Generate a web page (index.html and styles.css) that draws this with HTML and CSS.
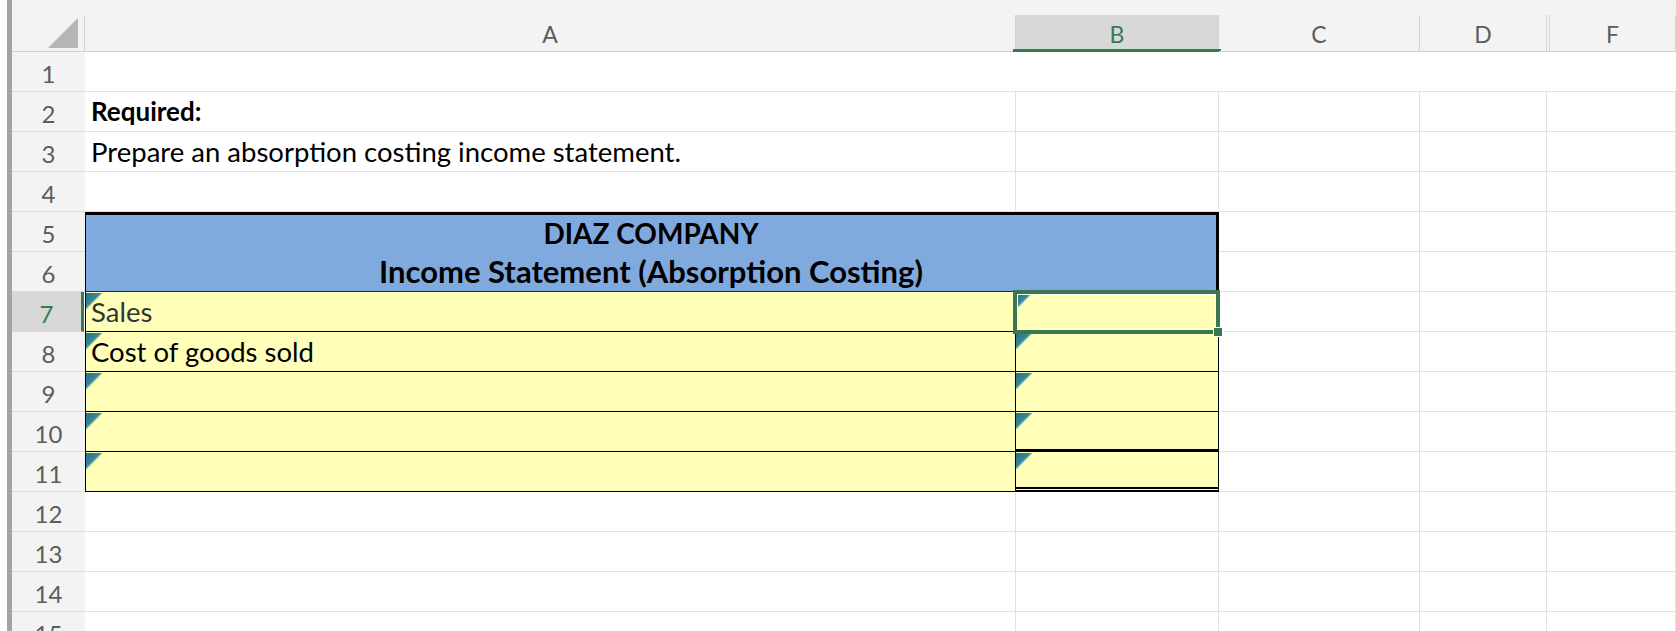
FILE: index.html
```html
<!DOCTYPE html>
<html lang="en">
<head>
    <meta charset="UTF-8">
    <title>Absorption costing</title>
    <link rel="stylesheet" href="styles.css">
</head>
<body>
    <div class="window">
        <div class="sheet">
            <div class="top-strip"></div>

            <div class="row head">
                <div class="hc corner">
                    <svg width="30" height="30" viewBox="0 0 30 30"><polygon points="0,30 30,30 30,0" fill="#b5b5b5"/></svg>
                </div>
                <div class="hc">A</div>
                <div class="hc sel">B</div>
                <div class="hc">C</div>
                <div class="hc">D</div>
                <div class="hc"></div>
                <div class="hc">F</div>
            </div>

            <div class="row first">
                <div class="rh">1</div>
                <div class="c"></div><div class="c"></div><div class="c"></div><div class="c"></div><div class="c e"></div><div class="c"></div>
            </div>
            <div class="row">
                <div class="rh">2</div>
                <div class="c bold">Required:</div><div class="c"></div><div class="c"></div><div class="c"></div><div class="c e"></div><div class="c"></div>
            </div>
            <div class="row">
                <div class="rh">3</div>
                <div class="c">Prepare an absorption costing income statement.</div><div class="c"></div><div class="c"></div><div class="c"></div><div class="c e"></div><div class="c"></div>
            </div>
            <div class="row">
                <div class="rh">4</div>
                <div class="c"></div><div class="c"></div><div class="c"></div><div class="c"></div><div class="c e"></div><div class="c"></div>
            </div>
            <div class="row">
                <div class="rh">5</div>
                <div class="c title top">DIAZ COMPANY</div><div class="c"></div><div class="c"></div><div class="c e"></div><div class="c"></div>
            </div>
            <div class="row">
                <div class="rh">6</div>
                <div class="c title bottom">Income Statement (Absorption Costing)</div><div class="c"></div><div class="c"></div><div class="c e"></div><div class="c"></div>
            </div>
            <div class="row">
                <div class="rh active">7</div>
                <div class="c in a tri grey">Sales</div>
                <div class="c in b tri">
                    <div class="selection"><span class="handle"></span></div>
                </div>
                <div class="c"></div><div class="c"></div><div class="c e"></div><div class="c"></div>
            </div>
            <div class="row">
                <div class="rh">8</div>
                <div class="c in a tri">Cost of goods sold</div><div class="c in b tri"></div><div class="c"></div><div class="c"></div><div class="c e"></div><div class="c"></div>
            </div>
            <div class="row">
                <div class="rh">9</div>
                <div class="c in a tri"></div><div class="c in b tri"></div><div class="c"></div><div class="c"></div><div class="c e"></div><div class="c"></div>
            </div>
            <div class="row">
                <div class="rh">10</div>
                <div class="c in a tri"></div><div class="c in b tri thick"></div><div class="c"></div><div class="c"></div><div class="c e"></div><div class="c"></div>
            </div>
            <div class="row">
                <div class="rh">11</div>
                <div class="c in a tri"></div><div class="c in b tri double"></div><div class="c"></div><div class="c"></div><div class="c e"></div><div class="c"></div>
            </div>
            <div class="row">
                <div class="rh">12</div>
                <div class="c"></div><div class="c"></div><div class="c"></div><div class="c"></div><div class="c e"></div><div class="c"></div>
            </div>
            <div class="row">
                <div class="rh">13</div>
                <div class="c"></div><div class="c"></div><div class="c"></div><div class="c"></div><div class="c e"></div><div class="c"></div>
            </div>
            <div class="row">
                <div class="rh">14</div>
                <div class="c"></div><div class="c"></div><div class="c"></div><div class="c"></div><div class="c e"></div><div class="c"></div>
            </div>
            <div class="row">
                <div class="rh">15</div>
                <div class="c"></div><div class="c"></div><div class="c"></div><div class="c"></div><div class="c e"></div><div class="c"></div>
            </div>
        </div>
    </div>
</body>
</html>
```

FILE: styles.css
```css
body {
    margin: 0;
    background: #ffffff;
    font-family: Lato, "Open Sans", sans-serif;
    color: #000000;
}

.window {
    padding-left: 7px;
    height: 631px;
    overflow: hidden;
}

.sheet {
    border-left: 5px solid #a3a3a3;
    height: 100%;
}

.top-strip {
    height: 15px;
    background: #f3f3f3;
}

.row {
    display: grid;
    grid-template-columns: 73px 931px 203px 201px 127px 3px 1fr;
    height: 40px;
}

/* column headers */
.row.head {
    height: 37px;
    background: #f3f3f3;
}

.hc {
    position: relative;
    display: flex;
    align-items: center;
    justify-content: center;
    border-right: 1px solid #d2d2d2;
    border-bottom: 1px solid #d2d2d2;
    color: #5c5c5c;
    font-size: 23px;
    padding-top: 2px;
}

.hc.corner {
    align-items: flex-end;
    justify-content: flex-end;
    padding: 0 6px 3px 0;
}

.hc.sel {
    background: #d8d8d8;
    color: #3a7a4f;
}

.hc.sel::after {
    content: "";
    position: absolute;
    left: -3px;
    right: -3px;
    bottom: -1px;
    height: 3px;
    background: #3a7a4f;
}

/* row headers */
.rh {
    display: flex;
    align-items: flex-end;
    justify-content: center;
    padding-bottom: 3px;
    background: #f3f3f3;
    border-bottom: 1px solid #dadada;
    color: #5c5c5c;
    font-size: 24px;
    box-sizing: border-box;
}

.rh.active {
    background: #d8d8d8;
    color: #3a7a4f;
    border-right: 3px solid #3a7a4f;
    margin-right: 1px;
}

/* cells */
.c {
    position: relative;
    display: flex;
    align-items: flex-end;
    padding: 0 6px 3px;
    border-right: 1px solid #e1e1e1;
    border-bottom: 1px solid #e1e1e1;
    box-sizing: border-box;
    font-size: 27.5px;
    white-space: nowrap;
}

.c.e {
    border-right: none;
}

.row.first .c {
    border-right: none;
}

.bold {
    font-weight: bold;
    font-size: 26px;
    padding-bottom: 4px;
}

.title {
    grid-column: span 2;
    justify-content: center;
    background: #80aade;
    border-left: 1px solid #000000;
    border-right: 3px solid #000000;
    font-weight: bold;
    font-size: 31px;
    padding-bottom: 1px;
}

.title.top {
    border-top: 3px solid #000000;
    border-bottom: none;
    font-size: 28px;
    padding-bottom: 2px;
}

.title.bottom {
    border-bottom: 1px solid #1f2a38;
}

.in {
    background: #ffffb9;
    border-bottom: 1px solid #000000;
    border-right: 1px solid #000000;
}

.in.a {
    border-left: 1px solid #000000;
    padding-left: 5px;
}

.in.thick {
    border-bottom: 3px solid #000000;
}

.in.double {
    border-bottom: 5px double #000000;
}

.grey {
    color: #333333;
}

.tri::before {
    content: "";
    position: absolute;
    top: 1px;
    left: 0;
    width: 16px;
    height: 16px;
    background: linear-gradient(135deg, #23728a 0%, #3a8798 45%, rgba(58, 135, 152, 0) 55%);
}

/* selected cell */
.selection {
    position: absolute;
    z-index: 2;
    top: -2px;
    left: -3px;
    right: -2px;
    bottom: -3px;
    border: 4px solid #3a7650;
    box-shadow: inset 0 0 0 1px #ffffff;
}

.handle {
    position: absolute;
    right: -7px;
    bottom: -7px;
    width: 8px;
    height: 8px;
    background: #3a7650;
    border: 1px solid #ffffff;
}
```
